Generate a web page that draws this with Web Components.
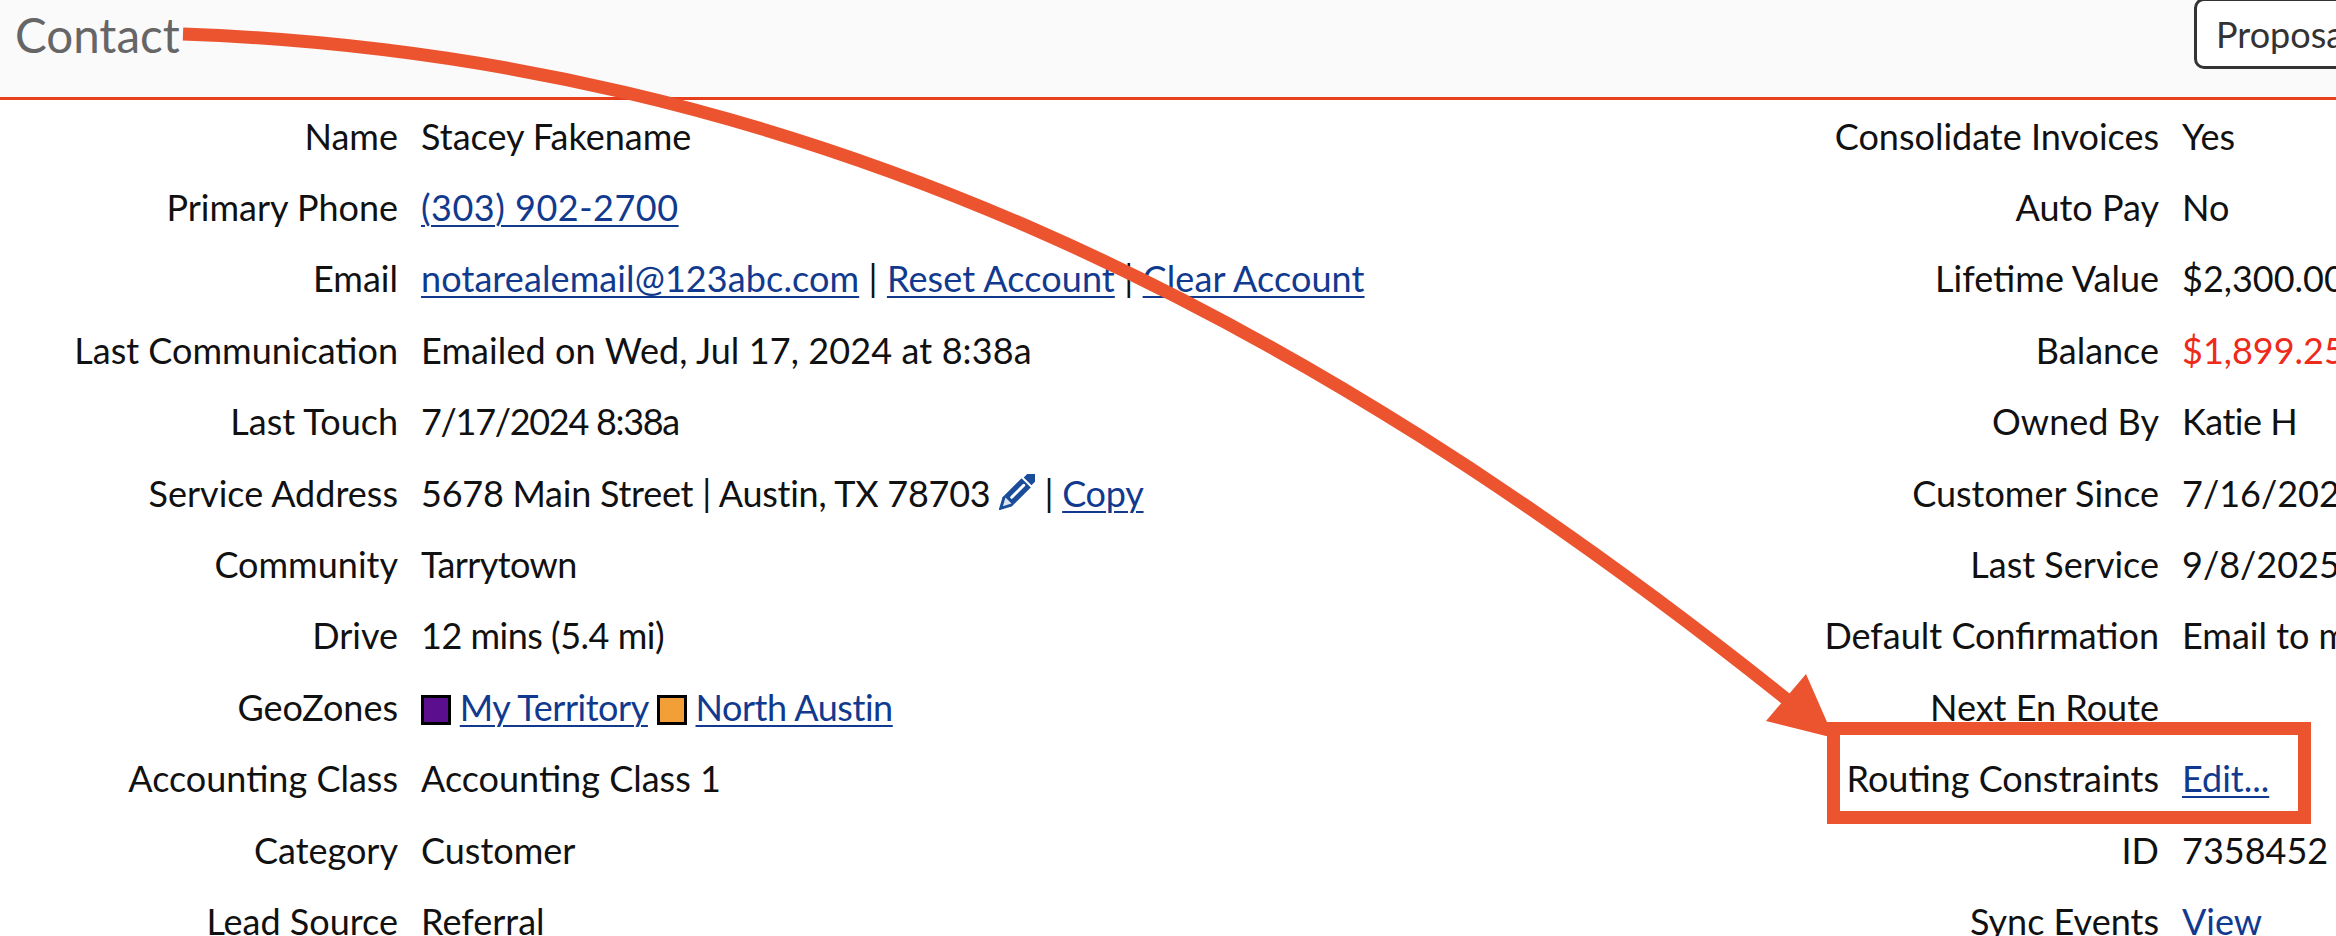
<!DOCTYPE html>
<html><head><meta charset="utf-8"><title>Contact</title>
<style>
html,body{margin:0;padding:0;background:#fff;overflow:hidden;width:2336px;height:936px}
body{font-family:"Lato","Liberation Sans",sans-serif;color:#111}
</style></head><body>
<contact-card>
<section-header slot="header" title-text="Contact"><pill-button>Proposal</pill-button></section-header>
<info-table slot="left" style="--label-width:398px">
<info-row label="Name">Stacey Fakename</info-row>
<info-row label="Primary Phone" style="--vs:.5px"><info-link>(303) 902-2700</info-link></info-row>
<info-row label="Email" style="--vs:.1px"><info-link>notarealemail@123abc.com</info-link> | <info-link>Reset Account</info-link> | <info-link>Clear Account</info-link></info-row>
<info-row label="Last Communication" style="--vs:.1px">Emailed on Wed, Jul 17, 2024 at 8:38a</info-row>
<info-row label="Last Touch" style="--vs:-1.3px">7/17/2024 8:38a</info-row>
<info-row label="Service Address" style="--vs:-.25px">5678 Main Street | Austin, TX 78703 <pencil-icon></pencil-icon> | <info-link>Copy</info-link></info-row>
<info-row label="Community" style="--vs:-.6px">Tarrytown</info-row>
<info-row label="Drive" style="--vs:-.5px">12 mins (5.4 mi)</info-row>
<info-row label="GeoZones" style="--vs:-.45px"><zone-swatch color="#5b0f8e"></zone-swatch> <info-link>My Territory</info-link> <zone-swatch color="#f29f38"></zone-swatch> <info-link>North Austin</info-link></info-row>
<info-row label="Accounting Class">Accounting Class 1</info-row>
<info-row label="Category">Customer</info-row>
<info-row label="Lead Source">Referral</info-row>
</info-table>
<info-table slot="right" style="--label-width:520px">
<info-row label="Consolidate Invoices">Yes</info-row>
<info-row label="Auto Pay">No</info-row>
<info-row label="Lifetime Value">$2,300.00</info-row>
<info-row label="Balance"><span style="color:#ee2a1a">$1,899.25</span></info-row>
<info-row label="Owned By" style="--vs:-.5px">Katie H</info-row>
<info-row label="Customer Since">7/16/2024</info-row>
<info-row label="Last Service">9/8/2025</info-row>
<info-row label="Default Confirmation">Email to me</info-row>
<info-row label="Next En Route"></info-row>
<info-row label="Routing Constraints"><info-link>Edit...</info-link></info-row>
<info-row label="ID">7358452</info-row>
<info-row label="Sync Events"><info-link plain>View</info-link></info-row>
</info-table>
<arrow-annotation slot="overlay"></arrow-annotation>
</contact-card>
<script>
function def(name, html, extra){
  const t=document.createElement('template');t.innerHTML=html;
  customElements.define(name,class extends HTMLElement{
    constructor(){super();this.attachShadow({mode:'open'}).appendChild(t.content.cloneNode(true));}
    connectedCallback(){extra&&extra(this,this.shadowRoot);}
  });
}
def('contact-card',`<style>
:host{display:block;position:relative;width:2336px;height:936px;overflow:hidden}
.body{display:flex;justify-content:space-between;width:2336px}
.col{flex:none}
.right{width:1000px;margin-right:-303px}
</style><slot name="header"></slot><div class="body"><div class="col"><slot name="left"></slot></div><div class="col right"><slot name="right"></slot></div></div><slot name="overlay"></slot>`);
def('section-header',`<style>
:host{display:flex;align-items:flex-start;justify-content:space-between;box-sizing:border-box;height:100px;background:#fafafa;border-bottom:3px solid #e8401c;padding-left:15px;overflow:hidden}
.t{font-size:47.500px;line-height:70px;color:#666;}
.a{margin-right:-142px;margin-top:-2px}
</style><div class="t"></div><div class="a"><slot></slot></div>`,(h,s)=>{s.querySelector('.t').textContent=h.getAttribute('title-text')});
def('pill-button',`<style>
:host{display:block;box-sizing:border-box;width:284px;height:71px;border:3px solid #333;border-radius:10px;background:#fff;font-size:36px;line-height:67px;padding-left:19px;color:#333}
</style><slot></slot>`);
def('info-table',`<style>:host{display:block}</style><slot></slot>`);
def('info-row',`<style>
:host{display:flex;gap:23px;height:71.4px;align-items:center;font-size:36px;white-space:nowrap;color:#111}
.l{width:var(--label-width);text-align:right;flex:none}
.v{flex:none;letter-spacing:var(--vs,0)}
</style><div class="l"></div><div class="v"><slot></slot></div>`,(h,s)=>{s.querySelector('.l').textContent=h.getAttribute('label')});
def('info-link',`<style>
:host{display:inline;color:#113a8f;text-decoration:underline;text-decoration-thickness:2px;text-underline-offset:4px}
:host([plain]){text-decoration:none}
</style><slot></slot>`);
def('pencil-icon',`<style>:host{display:inline-block;width:36px;height:36px;vertical-align:-3px}svg{display:block}</style>
<svg width="36" height="36" viewBox="0 0 36 36"><g transform="rotate(45 18 18)"><path fill="#1a4c9a" d="M12.500-4.500a5.500 5.500 0 0 1 11 0V3h-11z"/><path fill="#1a4c9a" d="M11.500 5h13v27L18 44l-6.500-12z"/><rect x="16.500" y="7" width="3" height="20" rx="1.500" fill="#fff"/><path fill="#fff" d="M13.800 30h8.400L18 38z" opacity=".85"/><path fill="#1a4c9a" d="M15.800 38h4.400L18 44z"/></g></svg>`);
def('zone-swatch',`<style>:host{display:inline-block;box-sizing:border-box;width:30px;height:30px;border:3px solid #000;vertical-align:-4px;background:var(--c)}</style>`,(h)=>{h.style.setProperty('--c',h.getAttribute('color'))});
def('arrow-annotation',`<style>:host{position:absolute;inset:0;display:block;pointer-events:none}svg{display:block}</style>
<svg width="2336" height="936" viewBox="0 0 2336 936">
<path d="M183 34C800 56 1300 310 1790 702" fill="none" stroke="#ec5430" stroke-width="13"/>
<path d="M1806 674L1766 721L1834 738z" fill="#ec5430"/>
<rect x="1833.500" y="728.500" width="471" height="89" fill="none" stroke="#ec5430" stroke-width="13"/>
</svg>`);
</script>
</body></html>
